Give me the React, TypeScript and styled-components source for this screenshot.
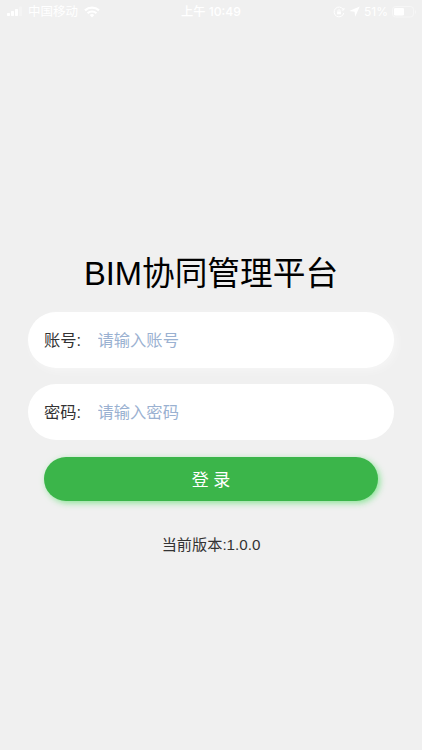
import React from "react";
import styled, { createGlobalStyle } from "styled-components";

const GlobalStyle = createGlobalStyle`
  * { box-sizing: border-box; }
  body {
    margin: 0;
    background: #f0f0f0;
    font-family: "Liberation Sans", "Noto Sans CJK SC", sans-serif;
  }
`;

const Screen = styled.div`
  height: 750px;
  display: flex;
  flex-direction: column;
  background: #f0f0f0;
  overflow: hidden;
`;

const StatusBar = styled.header`
  height: 22px;
  padding: 0 5px 0 7px;
  display: grid;
  grid-template-columns: 1fr auto 1fr;
  align-items: center;
  color: #fff;
  font-family: Inter, "Noto Sans CJK SC", sans-serif;
  font-size: 12.5px;
  line-height: 22px;
  white-space: nowrap;
`;

const StatusGroup = styled.div<{ $end?: boolean }>`
  display: flex;
  align-items: center;
  justify-content: ${(p) => (p.$end ? "flex-end" : "flex-start")};
  gap: ${(p) => (p.$end ? "4px" : "6px")};
`;

const StatusText = styled.span`
  padding-top: 1px;
`;

const Percent = styled(StatusText)`
  font-size: 12px;
`;

const Clock = styled.div`
  padding: 1px 2px 0 0;
  font-size: 12.2px;
  font-weight: 500;
`;

const Login = styled.main`
  padding: 230px 28px 0;
  display: flex;
  flex-direction: column;
`;

const Title = styled.h1`
  margin: 0 0 11px;
  height: 49px;
  line-height: 44px;
  font-size: 32.7px;
  font-weight: 400;
  text-align: center;
  color: #000;
  white-space: nowrap;
`;

const Field = styled.label<{ $glow?: boolean }>`
  height: 56px;
  margin-bottom: 16.4px;
  padding-left: 16px;
  display: flex;
  align-items: center;
  border-radius: 28px;
  background: #fff;
  font-size: 16.3px;
  color: #333;
  box-shadow: ${(p) => (p.$glow ? "3px 3px 10px rgba(255, 255, 255, 0.4)" : "none")};
`;

const FieldName = styled.span`
  width: 53.5px;
  padding-bottom: 2px;
`;

const FieldInput = styled.input`
  flex: 1;
  min-width: 0;
  height: 30px;
  padding: 0;
  border: 0;
  outline: 0;
  background: transparent;
  font: inherit;
  &::placeholder { color: #9ab1d1; opacity: 1; }
`;

const Submit = styled.button`
  height: 44.5px;
  margin: 0 16px;
  padding: 0 0 2px;
  border: 0;
  border-radius: 23px;
  background: #3bb54a;
  color: #fff;
  font: inherit;
  font-size: 17px;
  box-shadow: 2px 2px 6px rgba(70, 220, 90, 0.6);
`;

const Version = styled.p`
  margin: 32px 0 0;
  line-height: 24px;
  font-size: 15.2px;
  text-align: center;
  color: #333;
`;

const Signal = () => (
  <svg width="15" height="11" viewBox="0 0 15 11" fill="#fff">
    <rect y="7" width="3" height="3" rx="0.7" />
    <rect x="4" y="5" width="3" height="5" rx="0.7" />
    <rect x="8" y="3" width="3" height="7" rx="0.7" />
    <rect x="12" y="0.5" width="3" height="9.5" rx="0.7" opacity="0.3" />
  </svg>
);

const Wifi = () => (
  <svg width="16" height="12" viewBox="0 0 16 12" fill="none" stroke="#fff" strokeWidth="2.2">
    <path d="M1 4.4a10.3 10.3 0 0 1 14 0M3.6 7.2a6.5 6.5 0 0 1 8.8 0" />
    <path d="M5.7 9a3.4 3.4 0 0 1 4.6 0L8 11.4Z" fill="#fff" stroke="none" />
  </svg>
);

const RotationLock = () => (
  <svg width="12" height="12" viewBox="0 0 12 12" fill="none" stroke="#fff">
    <path d="M10.2 3.4A4.9 4.9 0 1 0 10.8 7M8.8 4.1l1.9-.1.4-2" />
    <rect x="4.1" y="5.5" width="3.8" height="2.8" fill="#fff" stroke="none" />
    <path d="M4.9 5.6v-.8a1.1 1.1 0 0 1 2.2 0v.8" strokeWidth="0.8" />
  </svg>
);

const Location = () => (
  <svg width="11" height="11" viewBox="0 0 11 11" fill="#fff">
    <path d="M10.7.4 6.2 10.8 5.6 5.7.2 5Z" />
  </svg>
);

const Battery = () => (
  <svg width="25" height="12" viewBox="0 0 25 12" fill="none">
    <rect x="0.5" y="0.5" width="21" height="10.5" rx="3" stroke="#fff" opacity="0.4" />
    <rect x="2" y="2" width="10" height="7.5" rx="1.2" fill="#fff" />
    <path d="M23 4v4c1.5-.5 1.5-3.5 0-4Z" fill="#fff" opacity="0.4" />
  </svg>
);

export default function App() {
  return (
    <>
      <GlobalStyle />
      <Screen>
        <StatusBar>
          <StatusGroup>
            <Signal />
            <StatusText>中国移动</StatusText>
            <Wifi />
          </StatusGroup>
          <Clock>上午 10:49</Clock>
          <StatusGroup $end>
            <RotationLock />
            <Location />
            <Percent>51%</Percent>
            <Battery />
          </StatusGroup>
        </StatusBar>
        <Login>
          <Title>BIM协同管理平台</Title>
          <Field $glow>
            <FieldName>账号:</FieldName>
            <FieldInput placeholder="请输入账号" />
          </Field>
          <Field>
            <FieldName>密码:</FieldName>
            <FieldInput type="password" placeholder="请输入密码" />
          </Field>
          <Submit>登 录</Submit>
          <Version>当前版本:1.0.0</Version>
        </Login>
      </Screen>
    </>
  );
}
